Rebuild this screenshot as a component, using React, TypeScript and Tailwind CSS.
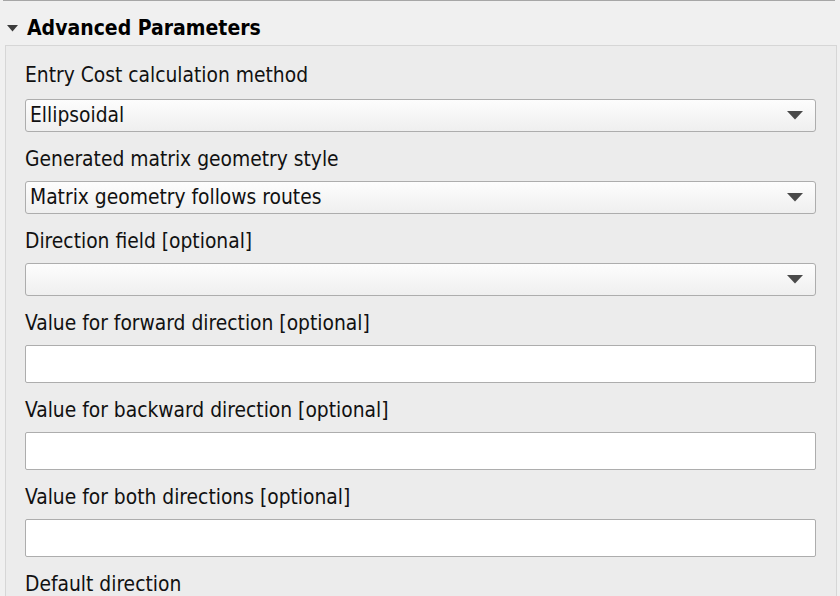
import { ReactNode } from 'react';

const font = { fontFamily: '"DejaVu Sans Condensed", "DejaVu Sans", sans-serif' };

function Arrow() {
  return (
    <svg width="16" height="9" viewBox="0 0 16 9" className="shrink-0">
      <path d="M0 0 L16 0 L8 8.5 Z" fill="#4a4a4a" />
    </svg>
  );
}

function Combo({ value }: { value?: string }) {
  return (
    <div className="flex h-[33px] items-center justify-between rounded-[3px] border border-[#adadad] bg-gradient-to-b from-[#fdfdfd] to-[#efefef] pl-[4px] pr-[12px] text-[20.8px] text-[#111]">
      <span>{value}</span>
      <Arrow />
    </div>
  );
}

function TextInput() {
  return <div className="h-[38px] rounded-[2px] border border-[#adadad] bg-white" />;
}

function Field({ label, first, children }: { label: string; first?: boolean; children: ReactNode }) {
  return (
    <div className="flex flex-col">
      <div
        className={`${first ? 'h-[53px] pt-[17px]' : 'h-[49px] pt-[15px]'} whitespace-nowrap text-[20.8px] leading-[24px] text-[#111]`}
      >
        {label}
      </div>
      {children}
    </div>
  );
}

export default function App() {
  return (
    <div className="h-[596px] w-[840px] overflow-hidden bg-[#f0f0f0]" style={font}>
      <div className="ml-[3px] mr-[5px] h-px bg-[#a6a6a6]" />
      <div className="flex h-[44px] items-start pl-[7px] pt-[15px]">
        <svg width="11" height="7" viewBox="0 0 11 7" className="mt-[9px]">
          <path d="M0 0 L11 0 L5.5 6.5 Z" fill="#3c3c3c" />
        </svg>
        <span className="ml-[9px] text-[21px] font-bold leading-[24px] text-black">Advanced Parameters</span>
      </div>
      <div className="ml-[5px] mr-[3px] border border-[#d6d6d6] bg-[#ececec] pb-[40px] pl-[19px] pr-[20px]">
        <Field label="Entry Cost calculation method" first>
          <Combo value="Ellipsoidal" />
        </Field>
        <Field label="Generated matrix geometry style">
          <Combo value="Matrix geometry follows routes" />
        </Field>
        <Field label="Direction field [optional]">
          <Combo />
        </Field>
        <Field label="Value for forward direction [optional]">
          <TextInput />
        </Field>
        <Field label="Value for backward direction [optional]">
          <TextInput />
        </Field>
        <Field label="Value for both directions [optional]">
          <TextInput />
        </Field>
        <Field label="Default direction">
          <div />
        </Field>
      </div>
    </div>
  );
}
